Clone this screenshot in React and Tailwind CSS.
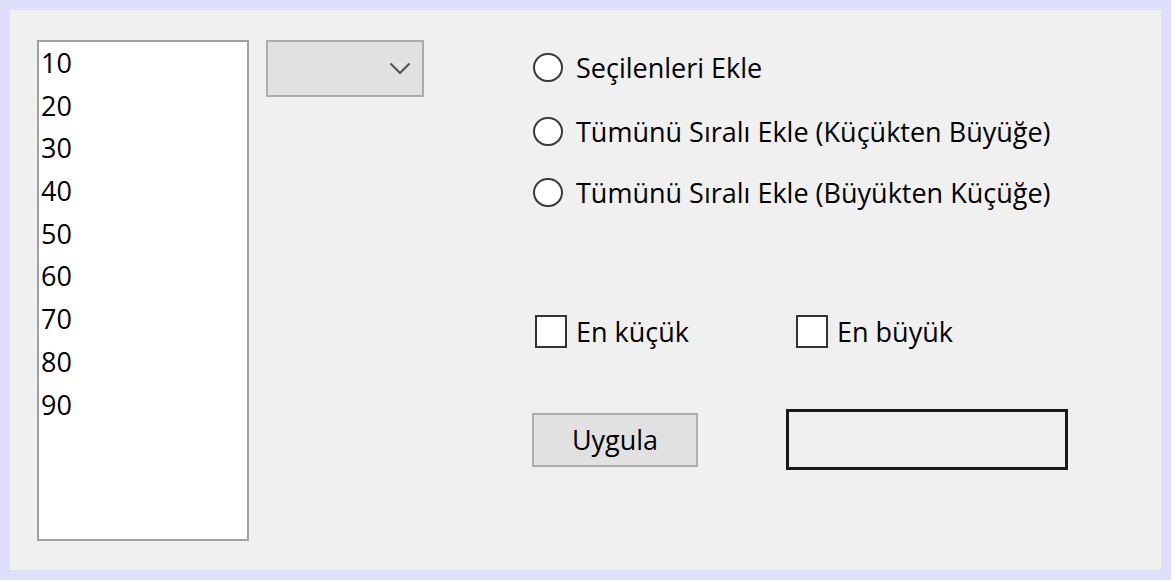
import React from "react";

const font = { fontFamily: '"Open Sans", "Noto Sans", sans-serif' };

function Radio({ label }) {
  return (
    <div className="flex items-center h-[40px]">
      <div className="w-[30px] h-[29px] rounded-full border-2 border-[#3a3a3a] bg-white shrink-0" />
      <span className="ml-[13px] text-[27px] text-black leading-none whitespace-nowrap">{label}</span>
    </div>
  );
}

function Check({ label }) {
  return (
    <div className="flex items-center h-[40px]">
      <div className="w-[32px] h-[33px] border-2 border-[#333333] bg-white shrink-0" />
      <span className="ml-[9px] text-[27px] text-black leading-none whitespace-nowrap">{label}</span>
    </div>
  );
}

export default function App() {
  const items = ["10", "20", "30", "40", "50", "60", "70", "80", "90"];
  return (
    <div className="w-[1176px] h-[582px] bg-white" style={font}>
      <div className="w-[1171px] h-[580px] bg-[#dfdffc] p-[10px]">
        <div className="w-full h-full bg-[#f0f0f0] flex items-start pl-[27px] pt-[30px]">
          <div className="w-[212px] h-[501px] border-2 border-[#a0a0a0] bg-white shrink-0">
            {items.map((t) => (
              <div key={t} className="h-[42.7px] leading-[42.7px] text-[27px] text-black pl-[2px]">
                {t}
              </div>
            ))}
          </div>
          <div className="ml-[17px] w-[158px] h-[57px] border-2 border-[#adadad] bg-[#e1e1e1] flex items-center justify-end pr-[11px] shrink-0">
            <svg width="22" height="13" viewBox="0 0 22 13">
              <polyline points="1.5,1.5 11,11 20.5,1.5" fill="none" stroke="#555555" strokeWidth="2.2" />
            </svg>
          </div>
          <div className="ml-[109px] flex flex-col">
            <div className="mt-[7px]">
              <Radio label="Seçilenleri Ekle" />
            </div>
            <div className="mt-[24px]">
              <Radio label="Tümünü Sıralı Ekle (Küçükten Büyüğe)" />
            </div>
            <div className="mt-[21px]">
              <Radio label="Tümünü Sıralı Ekle (Büyükten Küçüğe)" />
            </div>
            <div className="mt-[99px] flex items-center">
              <div className="w-[263px] pl-[2px]">
                <Check label="En küçük" />
              </div>
              <Check label="En büyük" />
            </div>
            <div className="mt-[58px] flex items-center">
              <button className="w-[166px] h-[54px] border-2 border-[#adadad] bg-[#e1e1e1] text-[27px] text-black leading-none -ml-[1px]">
                Uygula
              </button>
              <div className="ml-[88px] w-[282px] h-[61px] border-[3px] border-[#1a1a1a] bg-[#f0f0f0]" />
            </div>
          </div>
        </div>
      </div>
    </div>
  );
}
